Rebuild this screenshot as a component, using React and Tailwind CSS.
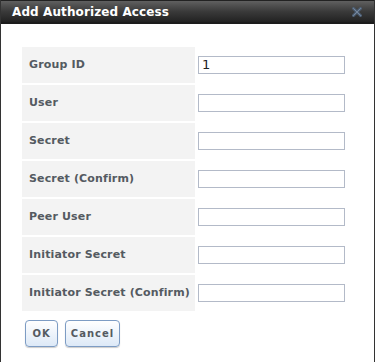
const FIELDS = [
  { label: 'Group ID', value: '1' },
  { label: 'User', value: '' },
  { label: 'Secret', value: '', type: 'password' },
  { label: 'Secret (Confirm)', value: '', type: 'password' },
  { label: 'Peer User', value: '' },
  { label: 'Initiator Secret', value: '', type: 'password' },
  { label: 'Initiator Secret (Confirm)', value: '', type: 'password' },
]

export default function App() {
  return (
    <div className="w-[375px] h-[362px] flex flex-col bg-white border-x border-[#333] overflow-hidden" style={{ fontFamily: '"DejaVu Sans", sans-serif' }}>
      {/* Title bar */}
      <div className="h-[24px] flex items-center justify-between pl-[11px] pr-[12px] bg-gradient-to-b from-[#606060] via-[#3a3a3a] to-[#222] border-t border-[#222] border-b-2 border-b-[#1c1c1c]">
        <span className="text-white text-[12px] font-bold tracking-[0.1px]">Add Authorized Access</span>
        <svg width="10" height="10" viewBox="0 0 10 10">
          <path d="M1.5 1.5 L8.5 8.5 M8.5 1.5 L1.5 8.5" stroke="#4e6076" strokeWidth="2.8" strokeLinecap="square" />
          <path d="M1.5 1.5 L8.5 8.5 M8.5 1.5 L1.5 8.5" stroke="#75869b" strokeWidth="1" strokeLinecap="round" />
        </svg>
      </div>

      {/* Form */}
      <div className="pt-[23px] pl-[21px] pr-[29px]">
        <div className="flex flex-col gap-[2px]">
          {FIELDS.map((f) => (
            <div key={f.label} className="flex h-[36px]">
              <div className="w-[174px] bg-[#f3f3f3] flex items-center pl-[7px] text-[11px] font-bold tracking-[0.15px] whitespace-nowrap text-[#545a61]">
                {f.label}
              </div>
              <div className="flex-1 flex items-center pl-[3px]">
                <input
                  type={f.type || 'text'}
                  defaultValue={f.value}
                  className="w-[147px] h-[18px] border border-[#b3bac8] px-[3px] text-[13px] text-[#222] outline-none"
                />
              </div>
            </div>
          ))}
        </div>

        <div className="flex gap-[7px] mt-[9px] pl-[3px]">
          <button className="w-[33px] h-[27px] rounded-[4px] border border-[#7d9cc4] bg-gradient-to-b from-white to-[#dde9f7] shadow-[0_1px_1px_rgba(0,0,0,0.2)] text-[10px] font-bold tracking-[1px] text-[#545a61]">
            OK
          </button>
          <button className="w-[55px] h-[27px] rounded-[4px] border border-[#7d9cc4] bg-gradient-to-b from-white to-[#dde9f7] shadow-[0_1px_1px_rgba(0,0,0,0.2)] text-[10px] font-bold tracking-[1px] text-[#545a61]">
            Cancel
          </button>
        </div>
      </div>
    </div>
  )
}
